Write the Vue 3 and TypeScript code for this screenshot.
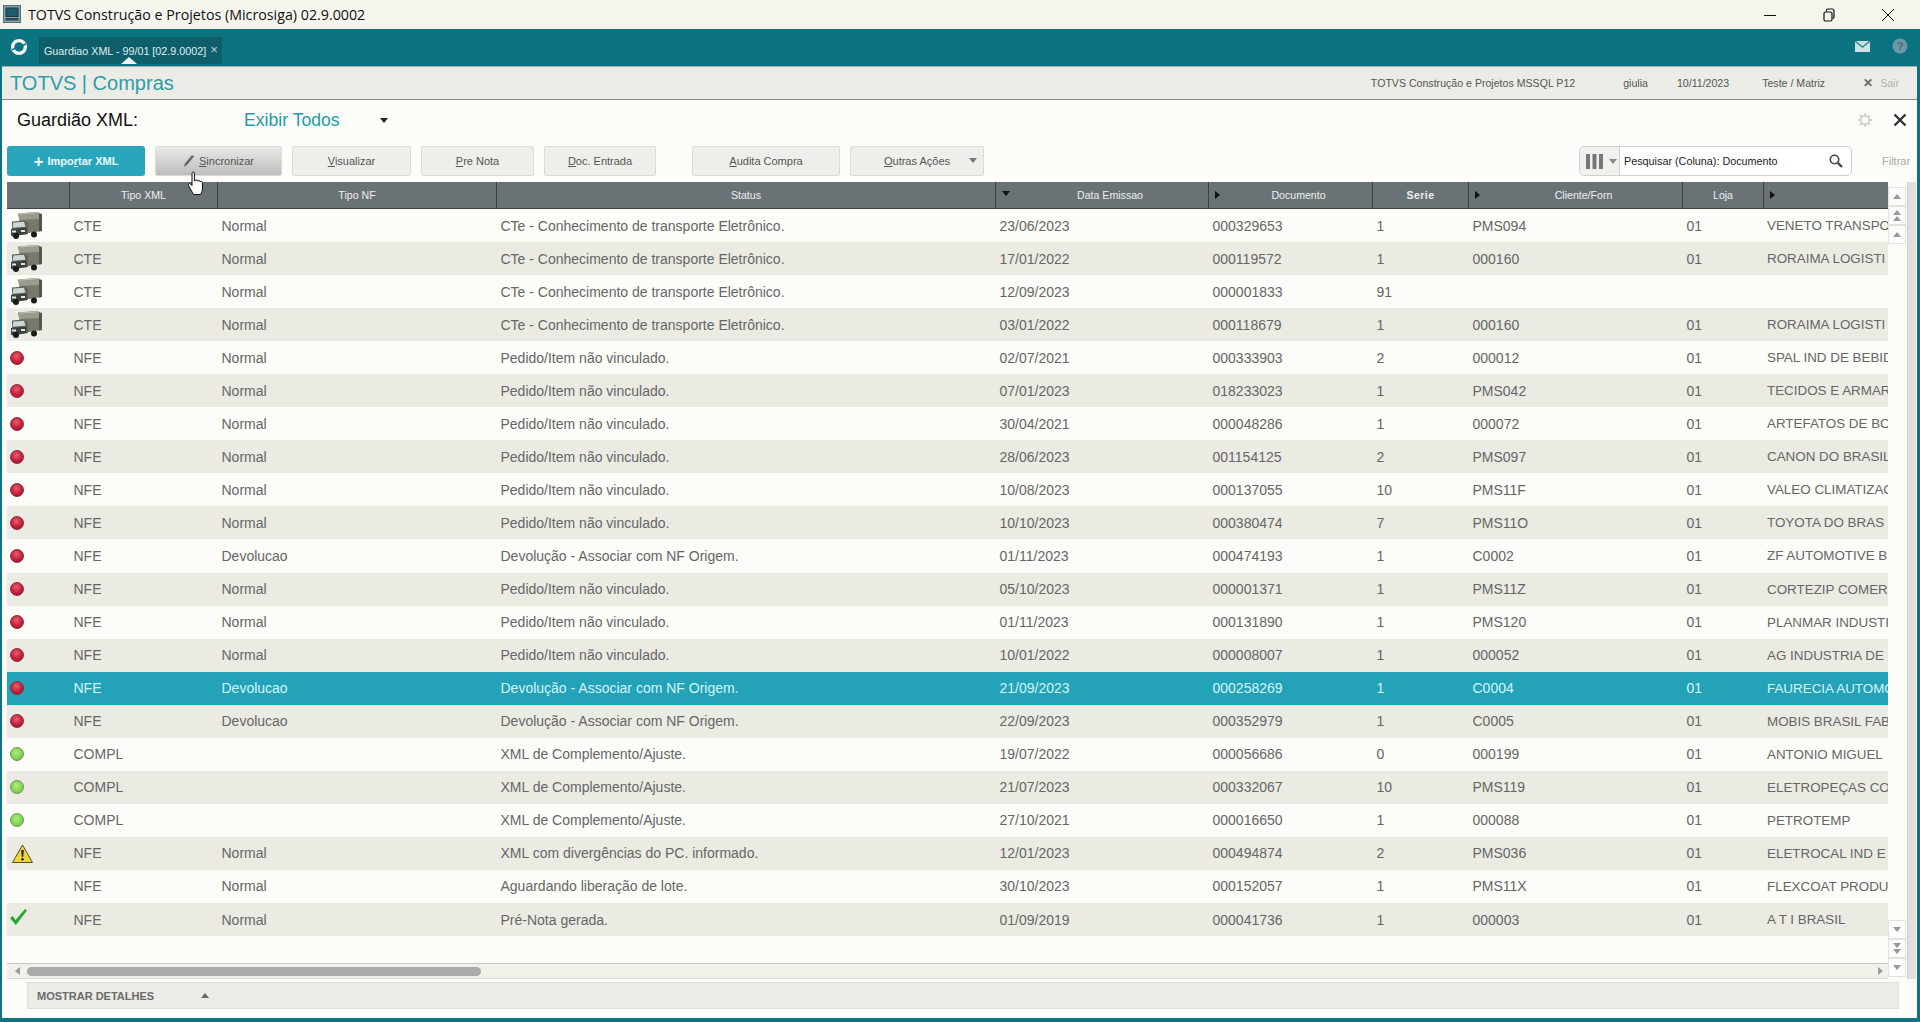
<template>
  <div class="app">
    <!-- window title -->
    <div class="titlebar">
      <svg class="win-icon" width="18" height="18" viewBox="0 0 18 18">
        <rect x="0.5" y="0.5" width="17" height="17" fill="#7fa5a8" stroke="#4f7477" />
        <rect x="3" y="3" width="12" height="8.5" fill="#1f5c72" stroke="#26363c" />
        <rect x="2.5" y="13" width="13" height="2.5" fill="#2c4a50" />
      </svg>
      <span class="win-title">TOTVS Construção e Projetos (Microsiga) 02.9.0002</span>
      <div class="win-controls">
        <svg width="14" height="14" viewBox="0 0 14 14"><path d="M1 7.5h12" stroke="#111" stroke-width="1" /></svg>
        <svg width="14" height="14" viewBox="0 0 14 14" fill="none" stroke="#111" stroke-width="1.2">
          <rect x="2" y="4" width="8" height="9" rx="1.5" />
          <path d="M4.5 3.5v-1.2c0-.8.5-1.3 1.3-1.3h4.2c1.2 0 2 .8 2 2v6c0 .8-.5 1.3-1.3 1.3" />
        </svg>
        <svg width="14" height="14" viewBox="0 0 14 14"><path d="M1 1l12 12M13 1L1 13" stroke="#111" stroke-width="1" /></svg>
      </div>
    </div>

    <!-- app tabs -->
    <div class="navbar">
      <svg class="logo" width="20" height="20" viewBox="0 0 20 20" fill="none">
        <circle cx="10" cy="10" r="6.4" stroke="#f2f6f6" stroke-width="3.4" />
        <path d="M3 12.5c3-.6 9-4 14-5.5" stroke="#0d6f7b" stroke-width="1.4" />
      </svg>
      <div class="tab">
        <span>Guardiao XML - 99/01 [02.9.0002]</span>
        <span class="tab-close">×</span>
        <i class="tab-arrow"></i>
      </div>
      <div class="nav-right">
        <svg width="15" height="11" viewBox="0 0 15 11">
          <rect width="15" height="11" fill="#cfe1e4" />
          <path d="M0 0l7.5 6L15 0" fill="none" stroke="#3f8a96" stroke-width="1.5" />
        </svg>
        <svg width="16" height="16" viewBox="0 0 16 16">
          <circle cx="8" cy="8" r="7.5" fill="#6d99a6" />
          <text x="8" y="12" text-anchor="middle" font-size="11" font-weight="700" font-family="Liberation Sans, sans-serif" fill="#446f7c">?</text>
        </svg>
      </div>
    </div>

    <div class="frame">
      <div class="subhead">
        <span class="brand">TOTVS | Compras</span>
        <div class="sub-info">
          <span class="si-company">TOTVS Construção e Projetos MSSQL P12</span>
          <span class="si-user">giulia</span>
          <span class="si-date">10/11/2023</span>
          <span class="si-branch">Teste / Matriz</span>
          <span class="si-x">✕</span>
          <span class="si-exit">Sair</span>
        </div>
      </div>

      <div class="viewhead">
        <span class="view-title">Guardião XML:</span>
        <span class="view-filter">Exibir Todos</span>
        <i class="tri-down view-caret"></i>
        <div class="view-tools">
          <svg width="16" height="16" viewBox="0 0 16 16" fill="none" stroke="#d2d2cc" stroke-width="2">
            <circle cx="8" cy="8" r="4.2" />
            <path d="M8 1v2.4M8 12.6V15M1 8h2.4M12.6 8H15M3 3l1.7 1.7M11.3 11.3L13 13M13 3l-1.7 1.7M4.7 11.3L3 13" />
          </svg>
          <svg width="14" height="14" viewBox="0 0 14 14"><path d="M1.5 1.5l11 11M12.5 1.5l-11 11" stroke="#333" stroke-width="2.4" /></svg>
        </div>
      </div>

      <div class="toolbar">
        <button class="btn primary" style="width: 138px"><b>+</b><span>Impo<u>r</u>tar XML</span></button>
        <button class="btn hover" style="width: 127px">
          <svg width="12" height="14" viewBox="0 0 12 14"><path d="M1 13l1-3.5L9 1l2 1.5L4 11z" fill="#666" /></svg>
          <span><u>S</u>incronizar</span>
        </button>
        <button class="btn" style="width: 119px"><span><u>V</u>isualizar</span></button>
        <button class="btn" style="width: 113px"><span><u>P</u>re Nota</span></button>
        <button class="btn" style="width: 112px"><span><u>D</u>oc. Entrada</span></button>
        <button class="btn audit" style="width: 148px"><span><u>A</u>udita Compra</span></button>
        <button class="btn more" style="width: 134px">
          <span><u>O</u>utras Ações</span>
          <i class="tri-down more-caret"></i>
        </button>

        <div class="search">
          <div class="search-cols">
            <svg width="17" height="15" viewBox="0 0 17 15" fill="#777"><rect x="0" y="0" width="4" height="15" /><rect x="6.5" y="0" width="4" height="15" /><rect x="13" y="0" width="4" height="15" /></svg>
            <i class="tri-down search-caret"></i>
          </div>
          <span class="search-text">Pesquisar (Coluna): Documento</span>
          <svg width="14" height="14" viewBox="0 0 14 14" fill="none" stroke="#444">
            <circle cx="5.5" cy="5.5" r="4.2" stroke-width="1.6" />
            <path d="M8.8 8.8L13 13" stroke-width="2.4" />
          </svg>
        </div>
        <span class="filter-label">Filtrar</span>
      </div>

      <div class="grid-area">
        <div class="grid-main">
          <div class="grid-body">
            <div class="grid-row grid-head">
              <div
                v-for="col in columns"
                :key="col.key"
                class="hcell"
                :class="{ bold: col.key === 'serie', marked: col.mark }"
              >
                <i v-if="col.mark === 'down'" class="hmark-down"></i>
                <i v-if="col.mark === 'right'" class="hmark-right"></i>
                {{ col.label }}
              </div>
            </div>
            <div
              v-for="(row, idx) in rows"
              :key="row.doc"
              class="grid-row drow"
              :class="{ alt: idx % 2 === 1, selected: idx === 14 }"
            >
              <div class="cell icon-cell">
                <svg v-if="row.icon === 'truck'" width="33" height="27" viewBox="0 0 33 27">
                  <path d="M8 1.5L27 0l5 2v17l-20 3z" fill="#77776c" />
                  <path d="M8 1.5L27 0l2 1.5L10 3z" fill="#b9b9aa" />
                  <path d="M9 3l20-1.5V7L9 8z" fill="#9a9a8d" />
                  <path d="M29 1.5L32 2.5v16.5l-3 .5z" fill="#55554d" />
                  <path d="M2 9.5l12-1 4 2.5v11l-16 2.5V12z" fill="#5c645c" />
                  <path d="M3.5 10.5l10.5-.8 1.5 5-13 1z" fill="#cdd7d1" />
                  <path d="M1 17l15.5-1.5V22L1 24z" fill="#3b413c" />
                  <rect x="2" y="18.5" width="4" height="2" fill="#e3e6df" />
                  <rect x="11" y="18" width="4" height="2" fill="#e3e6df" />
                  <circle cx="6" cy="24" r="3" fill="#181b1a" />
                  <circle cx="24" cy="22.5" r="3" fill="#181b1a" />
                </svg>
                <span v-else-if="row.icon === 'red'" class="ball red"></span>
                <span v-else-if="row.icon === 'green'" class="ball green"></span>
                <svg v-else-if="row.icon === 'warn'" class="warn" width="21" height="19" viewBox="0 0 21 19">
                  <path d="M10.5 1L20.5 18.5H.5z" fill="#f1d436" stroke="#55502a" stroke-linejoin="round" />
                  <path d="M9.3 6h2.4l-.5 7H9.8z" fill="#1c1c1c" />
                  <circle cx="10.5" cy="15.3" r="1.3" fill="#1c1c1c" />
                </svg>
                <svg v-else-if="row.icon === 'check'" class="check" width="17" height="16" viewBox="0 0 17 16">
                  <path d="M0 9l2.6-2 3 4L15 0l2 1.5L5.8 16z" fill="#1fab28" />
                </svg>
              </div>
              <div class="cell">{{ row.xml }}</div>
              <div class="cell">{{ row.nf }}</div>
              <div class="cell">{{ row.status }}</div>
              <div class="cell">{{ row.date }}</div>
              <div class="cell">{{ row.doc }}</div>
              <div class="cell">{{ row.serie }}</div>
              <div class="cell">{{ row.client }}</div>
              <div class="cell">{{ row.client ? '01' : '' }}</div>
              <div class="cell name-cell">{{ row.name }}</div>
            </div>
          </div>
          <div class="hscroll">
            <i class="tri-left"></i>
            <div class="hthumb"></div>
            <i class="tri-right"></i>
          </div>
        </div>

        <div class="vscroll">
          <div class="vbtns top">
            <div class="vbtn"><i class="tri-up"></i></div>
            <div class="vbtn"><i class="tri-up"></i><i class="tri-up"></i></div>
            <div class="vbtn"><i class="tri-up"></i></div>
          </div>
          <div class="vbtns bottom">
            <div class="vbtn"><i class="tri-down"></i></div>
            <div class="vbtn"><i class="tri-down"></i><i class="tri-down"></i></div>
            <div class="vbtn"><i class="tri-down"></i></div>
          </div>
        </div>
        <div class="vtrack"></div>
      </div>

      <div class="details">
        <span class="details-label">MOSTRAR DETALHES</span>
        <i class="tri-up details-caret"></i>
      </div>
    </div>

    <!-- mouse pointer from the capture -->
    <svg class="pointer" width="20" height="25" viewBox="0 0 20 25">
      <path
        d="M5 2c0-1.3 2.4-1.3 2.4 0v8l.6-.2c0-1.400 2.300-1.400 2.300 0l.2.4c.2-1.300 2.300-1.200 2.400.2l.1.6c.3-1.200 2.200-1 2.300.4l.2 5.600c0 3-1 4.600-2 6.500H6.500L1.600 14.800c-1-1.400.8-3 2-1.800L5 14.500z"
        fill="#fff"
        stroke="#111"
        stroke-width="1"
        stroke-linejoin="round"
      />
    </svg>
  </div>
</template>

<script setup lang="ts">
interface Column {
  key: string;
  label: string;
  mark?: 'down' | 'right';
}

interface Row {
  icon: 'truck' | 'red' | 'green' | 'warn' | 'check' | '';
  xml: string;
  nf: string;
  status: string;
  date: string;
  doc: string;
  serie: string;
  client: string;
  name: string;
}

const columns: Column[] = [
  { key: 'icon', label: '' },
  { key: 'xml', label: 'Tipo XML' },
  { key: 'nf', label: 'Tipo NF' },
  { key: 'status', label: 'Status' },
  { key: 'date', label: 'Data Emissao', mark: 'down' },
  { key: 'doc', label: 'Documento', mark: 'right' },
  { key: 'serie', label: 'Serie' },
  { key: 'client', label: 'Cliente/Forn', mark: 'right' },
  { key: 'loja', label: 'Loja' },
  { key: 'name', label: '', mark: 'right' },
];

const CTE = 'CTe - Conhecimento de transporte Eletrônico.';
const PED = 'Pedido/Item não vinculado.';
const DEV = 'Devolução - Associar com NF Origem.';
const COMPL = 'XML de Complemento/Ajuste.';

function mk(icon: Row['icon'], xml: string, nf: string, status: string, date: string, doc: string, serie: string, client: string, name: string): Row {
  return { icon, xml, nf, status, date, doc, serie, client, name };
}

const rows: Row[] = [
  mk('truck', 'CTE', 'Normal', CTE, '23/06/2023', '000329653', '1', 'PMS094', 'VENETO TRANSPO'),
  mk('truck', 'CTE', 'Normal', CTE, '17/01/2022', '000119572', '1', '000160', 'RORAIMA LOGISTI'),
  mk('truck', 'CTE', 'Normal', CTE, '12/09/2023', '000001833', '91', '', ''),
  mk('truck', 'CTE', 'Normal', CTE, '03/01/2022', '000118679', '1', '000160', 'RORAIMA LOGISTI'),
  mk('red', 'NFE', 'Normal', PED, '02/07/2021', '000333903', '2', '000012', 'SPAL IND DE BEBID'),
  mk('red', 'NFE', 'Normal', PED, '07/01/2023', '018233023', '1', 'PMS042', 'TECIDOS E ARMAR'),
  mk('red', 'NFE', 'Normal', PED, '30/04/2021', '000048286', '1', '000072', 'ARTEFATOS DE BO'),
  mk('red', 'NFE', 'Normal', PED, '28/06/2023', '001154125', '2', 'PMS097', 'CANON DO BRASIL'),
  mk('red', 'NFE', 'Normal', PED, '10/08/2023', '000137055', '10', 'PMS11F', 'VALEO CLIMATIZAC'),
  mk('red', 'NFE', 'Normal', PED, '10/10/2023', '000380474', '7', 'PMS11O', 'TOYOTA DO BRAS'),
  mk('red', 'NFE', 'Devolucao', DEV, '01/11/2023', '000474193', '1', 'C0002', 'ZF AUTOMOTIVE B'),
  mk('red', 'NFE', 'Normal', PED, '05/10/2023', '000001371', '1', 'PMS11Z', 'CORTEZIP COMER'),
  mk('red', 'NFE', 'Normal', PED, '01/11/2023', '000131890', '1', 'PMS120', 'PLANMAR INDUSTI'),
  mk('red', 'NFE', 'Normal', PED, '10/01/2022', '000008007', '1', '000052', 'AG INDUSTRIA DE'),
  mk('red', 'NFE', 'Devolucao', DEV, '21/09/2023', '000258269', '1', 'C0004', 'FAURECIA AUTOMO'),
  mk('red', 'NFE', 'Devolucao', DEV, '22/09/2023', '000352979', '1', 'C0005', 'MOBIS BRASIL FAB'),
  mk('green', 'COMPL', '', COMPL, '19/07/2022', '000056686', '0', '000199', 'ANTONIO MIGUEL'),
  mk('green', 'COMPL', '', COMPL, '21/07/2023', '000332067', '10', 'PMS119', 'ELETROPEÇAS CO'),
  mk('green', 'COMPL', '', COMPL, '27/10/2021', '000016650', '1', '000088', 'PETROTEMP'),
  mk('warn', 'NFE', 'Normal', 'XML com divergências do PC. informado.', '12/01/2023', '000494874', '2', 'PMS036', 'ELETROCAL IND E'),
  mk('', 'NFE', 'Normal', 'Aguardando liberação de lote.', '30/10/2023', '000152057', '1', 'PMS11X', 'FLEXCOAT PRODU'),
  mk('check', 'NFE', 'Normal', 'Pré-Nota gerada.', '01/09/2019', '000041736', '1', '000003', 'A T I BRASIL'),
];
</script>

<style>
html,
body {
  margin: 0;
  background: #0b7480;
}
</style>

<style scoped>
.app {
  position: relative;
  width: 1920px;
  height: 1022px;
  display: flex;
  flex-direction: column;
  overflow: hidden;
  font-family: "Liberation Sans", Arial, sans-serif;
  background: #0b7480;
}

.titlebar {
  height: 29px;
  flex: none;
  display: flex;
  align-items: center;
  padding: 0 25px 0 3px;
  background: #f5f5ee;
}

.win-icon {
  margin-top: -1px;
}

.win-title {
  margin-left: 7px;
  font-family: "Open Sans", sans-serif;
  font-size: 14.25px;
  color: #111;
}

.win-controls {
  margin-left: auto;
  display: flex;
  gap: 45px;
}

.navbar {
  height: 37px;
  flex: none;
  display: flex;
  align-items: flex-end;
  background: #0b7480;
}

.logo {
  margin: 0 10px 9px 9px;
}

.tab {
  position: relative;
  width: 183px;
  height: 27px;
  margin-bottom: 2px;
  padding-left: 5px;
  box-sizing: border-box;
  display: flex;
  align-items: center;
  background: #0e5f6b;
  color: #dfeef0;
  font-size: 10.75px;
  white-space: nowrap;
}

.tab-close {
  margin-left: 4px;
  margin-top: -3px;
  font-size: 13px;
  color: #b8d4d8;
}

.tab-arrow {
  position: absolute;
  left: 82px;
  bottom: 0;
  width: 0;
  height: 0;
  border-left: 8px solid transparent;
  border-right: 8px solid transparent;
  border-bottom: 7px solid #f0f4f4;
}

.nav-right {
  margin-left: auto;
  margin-bottom: 12px;
  padding-right: 12px;
  display: flex;
  align-items: center;
  gap: 22px;
}

.frame {
  flex: 1;
  min-height: 0;
  margin: 0 3px 4px 2px;
  display: flex;
  flex-direction: column;
  background: #fcfcf8;
}

.subhead {
  height: 34px;
  flex: none;
  display: flex;
  align-items: center;
  padding: 0 18px 0 8px;
  box-sizing: border-box;
  background: #ecece6;
  border-top: 1px solid #a9a9a4;
  border-bottom: 1px solid #8d8d88;
}

.brand {
  font-size: 20px;
  color: #2e9ca8;
}

.sub-info {
  margin-left: auto;
  display: flex;
  align-items: center;
  font-size: 10.6px;
  color: #555;
}

.si-user {
  margin-left: 48px;
}

.si-date {
  margin-left: 29px;
}

.si-branch {
  margin-left: 33px;
}

.si-x {
  margin-left: 38px;
  font-weight: 700;
  font-size: 12px;
  color: #666;
}

.si-exit {
  margin-left: 7px;
  color: #b0b0ac;
}

.viewhead {
  height: 46px;
  flex: none;
  display: flex;
  align-items: center;
  padding: 0 10px 6px 15px;
  box-sizing: border-box;
}

.view-title {
  font-size: 18px;
  color: #111;
}

.view-filter {
  margin-left: 106px;
  font-size: 17.6px;
  color: #1f9ba8;
}

.viewhead .view-caret {
  margin-left: 40px;
  border-top-color: #222;
}

.view-tools {
  margin-left: auto;
  display: flex;
  align-items: center;
  gap: 20px;
}

.toolbar {
  height: 30px;
  flex: none;
  display: flex;
  align-items: stretch;
  gap: 10px;
  padding: 0 7px 0 5px;
}

.btn {
  padding: 0;
  display: flex;
  align-items: center;
  justify-content: center;
  gap: 4px;
  background: #eeeeea;
  border: 1px solid #dcdcd6;
  border-radius: 2px;
  font-family: inherit;
  font-size: 11px;
  color: #555;
}

.btn.primary {
  border: 0;
  border-radius: 3px;
  background: #2aa6bc;
  color: #eefafc;
  font-weight: 700;
}

.btn.primary b {
  font-size: 17px;
  line-height: 1;
}

.btn.hover {
  background: linear-gradient(#e9e9e7, #bdbdbb);
}

.btn.audit {
  margin-left: 26px;
}

.btn.more {
  position: relative;
}

.btn.more .more-caret {
  position: absolute;
  right: 6px;
  top: 11px;
  border-top-color: #777;
}

.search {
  width: 273px;
  margin-left: auto;
  display: flex;
  align-items: center;
  padding-right: 8px;
  box-sizing: border-box;
  background: #fff;
  border: 1px solid #cfcfd4;
  border-radius: 5px;
}

.search-cols {
  width: 40px;
  height: 100%;
  flex: none;
  display: flex;
  align-items: center;
  gap: 6px;
  padding-left: 6px;
  box-sizing: border-box;
  background: #f0f0ec;
  border-right: 1px solid #cfcfd4;
  border-radius: 5px 0 0 5px;
}

.search-cols .search-caret {
  border-top-color: #888;
}

.search-text {
  flex: 1;
  margin-left: 4px;
  font-size: 10.8px;
  color: #222;
}

.filter-label {
  width: 28px;
  margin-left: 20px;
  align-self: center;
  font-size: 11px;
  color: #a8a8a4;
}

.grid-area {
  flex: 1;
  min-height: 0;
  margin-top: 6px;
  display: flex;
  padding-left: 5px;
}

.grid-main {
  width: 1881px;
  flex: none;
  display: flex;
  flex-direction: column;
}

.grid-body {
  flex: 1;
  min-height: 0;
  overflow: hidden;
}

.grid-row {
  display: grid;
  grid-template-columns: 63px 148px 279px 499px 213px 164px 96px 214px 81px 124px;
}

.grid-head {
  height: 27px;
  background: #6a7276;
  border-bottom: 1px solid #3c4144;
  box-sizing: border-box;
}

.hcell {
  position: relative;
  display: flex;
  align-items: center;
  justify-content: center;
  border-right: 1px solid #3c4144;
  box-sizing: border-box;
  font-size: 10.6px;
  color: #eef0f0;
}

.hcell.marked {
  padding-left: 16px;
}

.hcell:last-child {
  border-right: 0;
}

.hcell.bold {
  font-weight: 700;
  letter-spacing: 0.4px;
}

.hmark-down,
.hmark-right {
  position: absolute;
  left: 6px;
  top: 9px;
  width: 0;
  height: 0;
}

.hmark-down {
  border-left: 4px solid transparent;
  border-right: 4px solid transparent;
  border-top: 5px solid #111;
}

.hmark-right {
  border-top: 4px solid transparent;
  border-bottom: 4px solid transparent;
  border-left: 5px solid #111;
}

.drow {
  height: 33.05px;
  background: #fcfcf8;
}

.drow.alt {
  background: #ebebe4;
}

.drow.selected {
  background: #23a2b8;
  color: #d4f6fb;
}

.cell {
  display: flex;
  align-items: center;
  padding-left: 3.5px;
  overflow: hidden;
  white-space: nowrap;
  font-size: 14px;
  color: #666;
}

.drow.selected .cell {
  color: #d4f6fb;
}

.name-cell {
  padding-left: 3px;
  font-size: 13.4px;
}

.icon-cell {
  padding-left: 3px;
}

.ball {
  width: 14px;
  height: 14px;
  border-radius: 50%;
  box-sizing: border-box;
}

.ball.red {
  background: radial-gradient(circle at 45% 35%, #e8606c, #c21f3c 55%, #8d1030);
  border: 1px solid #8c2a3c;
}

.ball.green {
  background: radial-gradient(circle at 45% 40%, #aef07a, #78cf4d 65%, #5da83a);
  border: 1px solid #75935f;
}

.warn {
  margin-left: 2px;
}

.check {
  margin-top: -5px;
}

.hscroll {
  height: 16px;
  flex: none;
  display: flex;
  align-items: center;
  padding: 0 5px 0 8px;
  box-sizing: border-box;
  background: #f1f1ea;
  border-top: 1px solid #c8c8c4;
  border-bottom: 1px solid #d8d8d4;
}

.hthumb {
  width: 454px;
  height: 9px;
  margin-left: 7px;
  background: #aaaaa8;
  border-radius: 5px;
}

.tri-left,
.tri-right,
.tri-up,
.tri-down {
  display: block;
  flex: none;
  width: 0;
  height: 0;
}

.tri-left {
  border-top: 4px solid transparent;
  border-bottom: 4px solid transparent;
  border-right: 5px solid #999;
}

.tri-right {
  margin-left: auto;
  border-top: 4px solid transparent;
  border-bottom: 4px solid transparent;
  border-left: 5px solid #999;
}

.tri-up {
  border-left: 4px solid transparent;
  border-right: 4px solid transparent;
  border-bottom: 5px solid #999;
}

.tri-down {
  border-left: 4px solid transparent;
  border-right: 4px solid transparent;
  border-top: 5px solid #999;
}

.vscroll {
  width: 18px;
  flex: none;
  display: flex;
  flex-direction: column;
  justify-content: space-between;
  padding: 5px 0 2px;
  box-sizing: border-box;
}

.vbtns {
  display: flex;
  flex-direction: column;
}

.vbtn {
  height: 19px;
  display: flex;
  flex-direction: column;
  align-items: center;
  justify-content: center;
  gap: 1px;
  border: 1px solid #e2e2e2;
  box-sizing: border-box;
}

.vtrack {
  width: 9px;
  margin-left: 1px;
  flex: none;
  background: #e0e0da;
  border-left: 1px solid #cfcfca;
  box-sizing: border-box;
}

.details {
  height: 27px;
  flex: none;
  margin: 3px 18px 9px 25px;
  display: flex;
  align-items: center;
  padding-left: 9px;
  background: #ecece6;
  border: 1px solid #e0e0da;
  box-sizing: border-box;
}

.details-label {
  font-size: 11px;
  font-weight: 700;
  color: #6a6a6a;
}

.details .details-caret {
  margin-left: 47px;
  border-bottom-color: #666;
}

.pointer {
  position: absolute;
  left: 187px;
  top: 171px;
}
</style>
